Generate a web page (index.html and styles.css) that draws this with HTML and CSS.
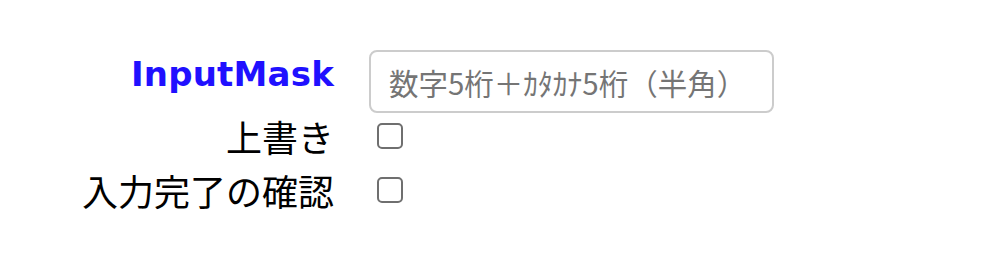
FILE: index.html
```html
<!DOCTYPE html>
<html lang="ja">
<head>
<meta charset="utf-8">
<link rel="stylesheet" href="styles.css">
</head>
<body>
<form class="form">
  <label class="label label-title" for="mask">InputMask</label>
  <div class="control control-input">
    <input id="mask" class="text-input" type="text" placeholder="数字5桁＋ｶﾀｶﾅ5桁（半角）">
  </div>
  <label class="label" for="over">上書き</label>
  <div class="control"><input id="over" class="check" type="checkbox"></div>
  <label class="label" for="done">入力完了の確認</label>
  <div class="control"><input id="done" class="check" type="checkbox"></div>
</form>
</body>
</html>
```
FILE: styles.css
```css
html, body {
  margin: 0;
  padding: 0;
  background: #fff;
}
.form {
  display: grid;
  grid-template-columns: 334px 405px;
  grid-template-rows: 59px 54px 54px;
  column-gap: 35px;
  padding-top: 50px;
  font-family: "Noto Sans CJK JP", sans-serif;
}
.label {
  font-size: 36px;
  color: #000;
  text-align: right;
  align-self: center;
  line-height: 40px;
  white-space: nowrap;
}
.label-title {
  font-family: "DejaVu Sans", sans-serif;
  font-weight: bold;
  font-size: 34px;
  letter-spacing: 0.2px;
  color: #2010ff;
  align-self: start;
  line-height: 38px;
  padding-top: 5px;
}
.control {
  display: flex;
  align-items: center;
}
.control-input {
  align-items: flex-start;
}
.text-input {
  box-sizing: border-box;
  width: 405px;
  height: 63px;
  margin: 0 0 -4px 0;
  border: 2px solid #cccccc;
  border-radius: 8px;
  padding: 0 18px;
  font-family: "Noto Sans CJK JP", sans-serif;
  font-size: 29.5px;
  color: #333;
  outline: none;
  background: #fff;
}
.text-input::placeholder {
  color: #757575;
}
.check {
  appearance: none;
  -webkit-appearance: none;
  box-sizing: border-box;
  width: 26px;
  height: 26px;
  margin: 0 0 0 8px;
  border: 2.5px solid #6f6f6f;
  border-radius: 5px;
  background: #fff;
}
```
